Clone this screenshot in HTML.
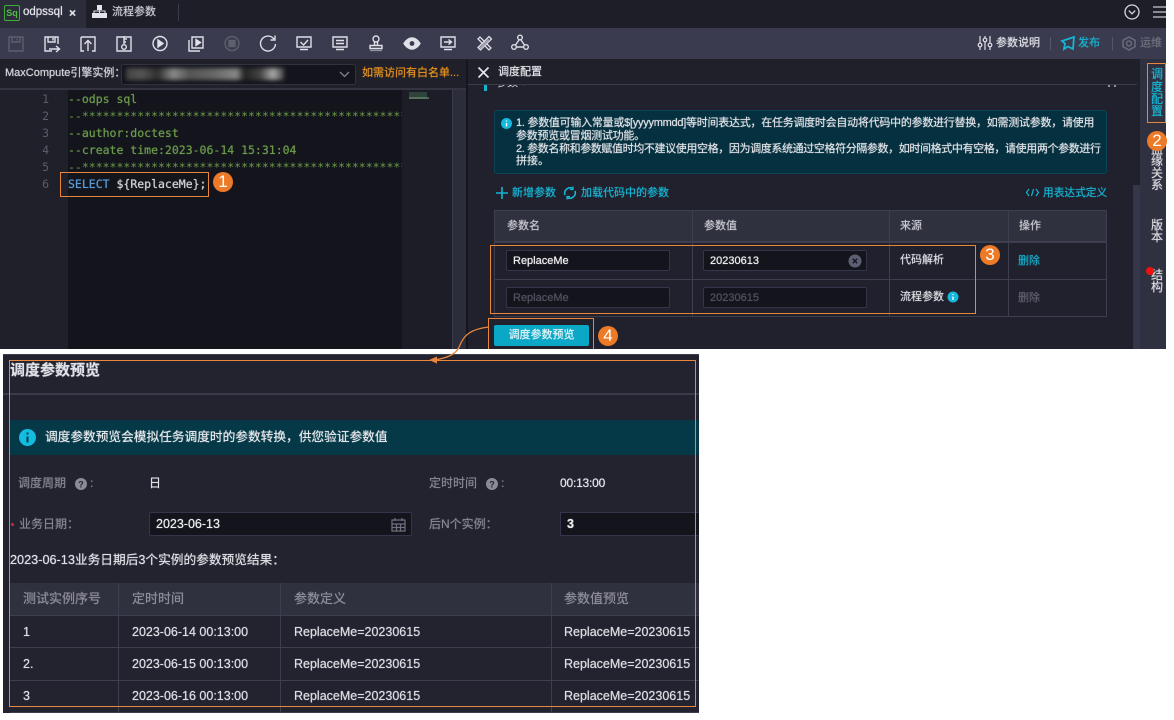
<!DOCTYPE html>
<html><head><meta charset="utf-8">
<style>
html,body{margin:0;padding:0;background:#fff}
#p{position:relative;width:1174px;height:720px;overflow:hidden;background:#fff;font-family:"Liberation Sans","Noto Sans CJK SC",sans-serif;font-size:11px;color:#d8d9de}
.a{position:absolute}
.t{position:absolute;white-space:nowrap;line-height:16px;transform:translateY(-8px);text-shadow:0 0 .7px currentColor}
.num{position:absolute;border-radius:50%;background:#ec7a26;color:#fff;width:20px;height:20px;line-height:20px;text-align:center;font-size:17px}
.ob{position:absolute;border:1px solid #e9863c;box-sizing:border-box}
.c{font-family:"DejaVu Sans Mono","Liberation Mono",monospace;font-size:11.5px;color:#6a9a4a}
.ln{position:absolute;left:30px;width:19px;text-align:right;font-family:"DejaVu Sans Mono",monospace;font-size:11.5px;color:#5a5c68;line-height:16px;transform:translateY(-8px)}
.inp{position:absolute;background:#14151c;border:1px solid #33354a;box-sizing:border-box;border-radius:2px}
.vt{position:absolute;left:1150px;font-size:12px;width:14px;text-align:center;line-height:14px;transform:translateY(-7px);text-shadow:0 0 .7px currentColor}
svg{position:absolute;overflow:visible}
</style></head><body><div id="p">

<!-- upper app -->
<div class="a" style="left:0;top:0;width:1166px;height:349px;background:#1f2029"></div>
<!-- tab bar -->
<div class="a" style="left:0;top:0;width:1166px;height:28px;background:#1d1e28"></div>
<div class="a" style="left:0;top:0;width:86px;height:28px;background:#2c2d3b"></div>
<div class="a" style="left:4px;top:5px;width:14px;height:14px;border:1px solid #3fae3a;border-radius:2px;color:#4fbe45;font-size:9px;line-height:14px;text-align:center;font-weight:bold">Sq</div>
<div class="t" style="left:23px;top:12px;font-size:11.5px;color:#e4e5ea">odpssql</div>
<div class="t" style="left:69px;top:13px;font-size:12px;color:#e4e5ea;font-weight:bold">×</div>
<svg style="left:92px;top:5px" width="15" height="14" fill="#e4e5ea"><rect x="5" y="0" width="5" height="5"/><rect x="0" y="8" width="5" height="5"/><rect x="10" y="8" width="5" height="5"/><path d="M2 8V6h11v2M7.5 5v3" stroke="#e4e5ea" fill="none"/><rect x="5" y="8" width="5" height="5"/></svg>
<div class="t" style="left:112px;top:12px;font-size:11px;color:#c9cad1">流程参数</div>
<div class="a" style="left:178px;top:4px;width:1px;height:17px;background:#3a3b4a"></div>
<svg style="left:1124px;top:4px" width="16" height="16" fill="none" stroke="#d5d6dc" stroke-width="1.3"><circle cx="8" cy="8" r="7"/><path d="M4.800 6.600 8 9.800l3.200-3.200"/></svg>
<svg style="left:1153px;top:6px" width="13" height="13" stroke="#c8c9d0" stroke-width="1.2"><path d="M0 1h13M0 6h13M0 11h13"/></svg>

<!-- toolbar -->
<div class="a" style="left:0;top:28px;width:1166px;height:31px;background:#3a3b4e"></div>
<svg style="left:0;top:28px" width="540" height="31" fill="none" stroke="#dfe0e8" stroke-width="1.4">
 <g stroke="#5d5f6d"><path d="M9 9h14v14H9zM12 9v5h8V9M17 10.500v2"/></g>
 <path d="M52 23h-7V9h13v7M48 9v5h7V9M53 10v2.500M49 21h10M56 18l3.500 3-3.500 3"/>
 <path d="M81 9h14v14h-3M84 23h-3V9M88 23v-10M84.500 16 88 12.500l3.500 3.500"/>
 <path d="M117 9h14v14h-14zM124 8v8M124 11h3M124 14h2"/><circle cx="124" cy="19" r="2.300"/>
 <circle cx="160" cy="15.500" r="7"/><path d="M158 12v7l5-3.500z" fill="#dfe0e8"/>
 <path d="M189 12v11h11M192 9h11v11h-11z"/><path d="M196 11.500v6l4.500-3z" fill="#dfe0e8"/>
 <g stroke="#5d5f6d"><circle cx="232" cy="15.500" r="7"/><rect x="229" y="12.500" width="6" height="6" fill="#5d5f6d"/></g>
 <path d="M274 11a7.500 7.500 0 1 0 1.500 5M275 7.500V12h-4.500"/>
 <path d="M297 9h14v10h-14zM300 21.500h8M300.500 14l3 3 4.500-5"/>
 <path d="M333 9h14v10h-14zM336 12.500h8M336 15.500h8M336 21.500h8" />
 <circle cx="376" cy="11" r="3"/><path d="M374.500 14v3M377.500 14v3M370 17.500h12v3h-12z"/><path d="M370 22.500h12" stroke="#8e8f9a"/>
 <path d="M404 15.500c2.500-4 5-5.500 8-5.500s5.500 1.500 8 5.500c-2.500 4-5 5.500-8 5.500s-5.500-1.500-8-5.500z" fill="#dfe0e8"/><circle cx="412" cy="15.500" r="2.400" fill="#3a3b4e" stroke="none"/>
 <path d="M441 9h14v10h-14zM444 21.500h8M444 14h7M448.500 11.500l3 2.500-3 2.500"/>
 <path d="M478 11l2-2 11 11-2 2zM489 8.500l2.500 2.500-11 11-2.500-2.500z" stroke-width="1.300"/><path d="M480 20.500l9-9" stroke="#a0a1ac" stroke-width="2.400"/>
 <circle cx="520" cy="9.500" r="2.300"/><circle cx="514" cy="19" r="2.300"/><circle cx="526" cy="19" r="2.300"/><path d="M519 12l-3.500 5M521 12l3.500 5M516.500 19h7"/>
</svg>
<svg style="left:978px;top:36px" width="14" height="14" fill="none" stroke="#dfe0e8" stroke-width="1.200"><path d="M2 0v14M7 0v14M12 0v14"/><circle cx="2" cy="9" r="1.800" fill="#3a3b4e"/><circle cx="7" cy="4" r="1.800" fill="#3a3b4e"/><circle cx="12" cy="9" r="1.800" fill="#3a3b4e"/></svg>
<div class="t" style="left:996px;top:43px;color:#dfe0e8;font-size:11px">参数说明</div>
<div class="a" style="left:1050px;top:37px;width:1px;height:13px;background:#565868"></div>
<svg style="left:1061px;top:36px" width="14" height="15" fill="none" stroke="#16b4d2" stroke-width="1.800"><path d="M1 5 13 1l-1 12-5-2.500L3 13l1-5.500z"/></svg>
<div class="t" style="left:1078px;top:43px;color:#16b4d2;font-size:11px">发布</div>
<div class="a" style="left:1112px;top:37px;width:1px;height:13px;background:#565868"></div>
<svg style="left:1122px;top:36px" width="14" height="15" fill="none" stroke="#6a6c7a" stroke-width="1.500"><path d="M7 1l6 3.300v6.400L7 14l-6-3.300V4.300z"/><circle cx="7" cy="7.500" r="2.500"/></svg>
<div class="t" style="left:1140px;top:43px;color:#6f717e;font-size:11px">运维</div>

<!-- row under toolbar -->
<div class="a" style="left:0;top:59px;width:1166px;height:30px;background:#1f2029"></div>
<div class="a" style="left:0;top:88px;width:466px;height:2px;background:#33343f"></div>
<div class="t" style="left:5px;top:73px;font-size:11px;color:#d4d5da">MaxCompute引擎实例：</div>
<div class="a" style="left:121px;top:64px;width:235px;height:21px;background:#14151c;border:1px solid #30323f;box-sizing:border-box;border-radius:3px"></div>
<div class="a" style="left:126px;top:68px;width:158px;height:12px;filter:blur(2px);background:linear-gradient(90deg,#444 0,#555 10%,#2e2e2e 20%,#8a8a8a 30%,#555 40%,#666 55%,#888 70%,#222 75%,#444 85%,#aaa 93%,#444 100%)"></div>
<svg style="left:339px;top:71px" width="11" height="7" fill="none" stroke="#7f818c" stroke-width="1.300"><path d="M1 1l4.500 4.500L10 1"/></svg>
<div class="t" style="left:362px;top:73px;color:#e6901f;font-size:11px">如需访问有白名单...</div>

<!-- editor -->
<div class="a" style="left:0;top:90px;width:68px;height:259px;background:#1f2029"></div>
<div class="a" style="left:68px;top:90px;width:334px;height:259px;background:#14151c"></div>
<div class="a" style="left:402px;top:90px;width:50px;height:259px;background:#1c1d27"></div>
<div class="a" style="left:452px;top:90px;width:14px;height:259px;background:#2c2d3a"></div>
<div class="a" style="left:409px;top:92px;width:18px;height:7px;background:#3b5f4a;opacity:.6"></div>
<div class="a" style="left:409px;top:97px;width:20px;height:2px;background:#7da07d;opacity:.5"></div>
<div class="a" style="left:452px;top:90px;width:0;height:259px;border-left:1px solid #3a3b4a"></div>
<div class="ln" style="top:99px">1</div><div class="ln" style="top:116px">2</div><div class="ln" style="top:133px">3</div><div class="ln" style="top:150px">4</div><div class="ln" style="top:167px">5</div><div class="ln" style="top:184px">6</div>
<div class="t c" style="left:68px;top:99px">--odps sql</div>
<div class="a" style="left:68px;top:108px;width:334px;height:16px;overflow:hidden;white-space:nowrap;line-height:16px"><span class="c">--*********************************************************</span></div>
<div class="t c" style="left:68px;top:133px">--author:doctest</div>
<div class="t c" style="left:68px;top:150px">--create time:2023-06-14 15:31:04</div>
<div class="a" style="left:68px;top:159px;width:334px;height:14px;overflow:hidden;white-space:nowrap;line-height:16px"><span class="c">--*********************************************************</span></div>
<div class="t c" style="left:68px;top:184px;color:#d0d2d8"><span style="color:#5a9bd5">SELECT</span> ${ReplaceMe};</div>
<div class="ob" style="left:60px;top:172px;width:149px;height:25px"></div>
<div class="num" style="left:213px;top:172px">1</div>

<!-- right panel -->
<div class="a" style="left:466px;top:60px;width:2px;height:289px;background:#14151c"></div>
<svg style="left:478px;top:67px" width="11" height="11" stroke="#e4e5ea" stroke-width="1.700"><path d="M0.500 0.500l10 10M10.500 0.500l-10 10"/></svg>
<div class="t" style="left:498px;top:72px;font-size:11px;color:#e4e5ea">调度配置</div>
<div class="a" style="left:468px;top:84px;width:669px;height:1px;background:#3b3c49"></div>
<div class="a" style="left:468px;top:85px;width:669px;height:264px;background:#20212d"></div>
<div class="a" style="left:484px;top:85px;width:3px;height:6px;background:#16b4d2"></div>
<div class="a" style="left:496px;top:85px;width:34px;height:5px;overflow:hidden"><div style="position:absolute;top:-9px;line-height:14px;white-space:nowrap;color:#d5d6dc;font-size:11px">参数 <span style="color:#16b4d2">●</span></div></div>
<div class="a" style="left:1108px;top:85px;width:8px;height:2px;border-left:2px solid #8e8f9a;border-right:2px solid #8e8f9a;box-sizing:border-box"></div>
<div class="a" style="left:494px;top:110px;width:613px;height:64px;background:#05303f;border:1px solid #0b4553;box-sizing:border-box;border-radius:3px"></div>
<svg style="left:501px;top:118px" width="11" height="11"><circle cx="5.500" cy="5.500" r="5.500" fill="#16b8dc"/><path d="M5.500 5v3.500M5.500 2.500v1" stroke="#fff" stroke-width="1.400"/></svg>
<div class="t" style="left:516px;top:123px;font-size:11px;color:#dfe1e6;letter-spacing:-.26px">1. 参数值可输入常量或$[yyyymmdd]等时间表达式，在任务调度时会自动将代码中的参数进行替换，如需测试参数，请使用</div>
<div class="t" style="left:516px;top:136px;font-size:11px;color:#dfe1e6;letter-spacing:-.26px">参数预览或冒烟测试功能。</div>
<div class="t" style="left:516px;top:149px;font-size:11px;color:#dfe1e6;letter-spacing:-.38px">2. 参数名称和参数赋值时均不建议使用空格，因为调度系统通过空格符分隔参数，如时间格式中有空格，请使用两个参数进行</div>
<div class="t" style="left:516px;top:161px;font-size:11px;color:#dfe1e6">拼接。</div>

<svg style="left:496px;top:187px" width="12" height="12" stroke="#16b4d2" stroke-width="1.600"><path d="M6 0v12M0 6h12"/></svg>
<div class="t" style="left:512px;top:192.500px;color:#16b4d2;font-size:11px">新增参数</div>
<svg style="left:563px;top:186px" width="14" height="14" fill="none" stroke="#16b4d2" stroke-width="1.600"><path d="M2 9a5.500 5.500 0 0 1 8-6.500M12 5a5.500 5.500 0 0 1-8 6.500"/><path d="M10 0.500v3H7M4 13.500v-3h3" stroke-width="1.200"/></svg>
<div class="t" style="left:581px;top:192.500px;color:#16b4d2;font-size:11px">加载代码中的参数</div>
<svg style="left:1026px;top:188px" width="13" height="9" fill="none" stroke="#16b4d2" stroke-width="1.200"><path d="M3 1 .5 4.500 3 8M10 1l2.500 3.500L10 8M7.500 1 5.500 8"/></svg>
<div class="t" style="left:1043px;top:192.500px;color:#16b4d2;font-size:10.700px">用表达式定义</div>

<!-- params table -->
<div class="a" style="left:494px;top:210px;width:613px;height:107px;border:1px solid #3d3f50;box-sizing:border-box"></div>
<div class="a" style="left:495px;top:211px;width:611px;height:31px;background:#30313f"></div>
<div class="a" style="left:495px;top:241px;width:611px;height:2px;background:#3d3f50"></div>
<div class="a" style="left:495px;top:279px;width:611px;height:1px;background:#3d3f50"></div>
<div class="a" style="left:692px;top:211px;width:1px;height:105px;background:#3d3f50"></div>
<div class="a" style="left:889px;top:211px;width:1px;height:105px;background:#3d3f50"></div>
<div class="a" style="left:1008px;top:211px;width:1px;height:105px;background:#3d3f50"></div>
<div class="t" style="left:507px;top:226px;color:#c8c9d1;font-size:11px">参数名</div>
<div class="t" style="left:704px;top:226px;color:#c8c9d1;font-size:11px">参数值</div>
<div class="t" style="left:900px;top:226px;color:#c8c9d1;font-size:11px">来源</div>
<div class="t" style="left:1019px;top:226px;color:#c8c9d1;font-size:11px">操作</div>
<div class="inp" style="left:506px;top:250px;width:164px;height:21px"></div>
<div class="inp" style="left:703px;top:250px;width:164px;height:21px"></div>
<div class="inp" style="left:506px;top:287px;width:164px;height:21px"></div>
<div class="inp" style="left:703px;top:287px;width:164px;height:21px"></div>
<div class="t" style="left:513px;top:261px;color:#f0f0f3;font-size:11px">ReplaceMe</div>
<div class="t" style="left:710px;top:261px;color:#f0f0f3;font-size:11px">20230613</div>
<svg style="left:848px;top:254px" width="14" height="14"><circle cx="7" cy="7" r="6.500" fill="#5d5f72"/><path d="M4.800 4.800l4.400 4.400M9.200 4.800l-4.400 4.400" stroke="#14151c" stroke-width="1.400"/></svg>
<div class="t" style="left:513px;top:298px;color:#4f515f;font-size:11px">ReplaceMe</div>
<div class="t" style="left:710px;top:298px;color:#4f515f;font-size:11px">20230615</div>
<div class="t" style="left:900px;top:260px;color:#dcdde2;font-size:11px">代码解析</div>
<div class="t" style="left:900px;top:297px;color:#dcdde2;font-size:11px">流程参数</div>
<svg style="left:947px;top:291px" width="12" height="12"><circle cx="6" cy="6" r="5.500" fill="#16b8dc"/><path d="M6 5.500v3.500M6 3v1" stroke="#fff" stroke-width="1.300"/></svg>
<div class="t" style="left:1018px;top:261px;color:#16a9c6;font-size:11px">删除</div>
<div class="t" style="left:1018px;top:298px;color:#5c5e6b;font-size:11px">删除</div>
<div class="ob" style="left:490px;top:245px;width:486px;height:69px"></div>
<div class="num" style="left:980px;top:245px">3</div>
<div class="a" style="left:494px;top:325px;width:95px;height:21px;background:#0aa7c6;border-radius:2px;color:#e8f6fa;text-align:center;line-height:21px;font-size:11px;text-shadow:0 0 .7px #e8f6fa">调度参数预览</div>
<div class="ob" style="left:488px;top:318px;width:106px;height:32px"></div>
<div class="num" style="left:598px;top:326px">4</div>

<!-- scrollbar + side tabs -->
<div class="a" style="left:1133px;top:185px;width:7px;height:164px;background:#34364a"></div>
<div class="a" style="left:1140px;top:59px;width:26px;height:290px;background:#2f3040"></div>
<div class="vt" style="top:74px;color:#16b4d2">调</div><div class="vt" style="top:87px;color:#16b4d2">度</div><div class="vt" style="top:99px;color:#16b4d2">配</div><div class="vt" style="top:111px;color:#16b4d2">置</div>
<div class="ob" style="left:1147px;top:63px;width:19px;height:60px"></div>
<div class="vt" style="top:150px">血</div><div class="vt" style="top:161px">缘</div><div class="vt" style="top:173px">关</div><div class="vt" style="top:185px">系</div>
<div class="num" style="left:1147px;top:131px">2</div>
<div class="vt" style="top:225px">版</div><div class="vt" style="top:237px">本</div>
<div class="vt" style="top:275px">结</div><div class="vt" style="top:287px">构</div>
<div class="a" style="left:1146px;top:267px;width:8px;height:8px;border-radius:50%;background:#f01010"></div>

<!-- white below -->
<div class="a" style="left:0;top:349px;width:1174px;height:371px;background:#fff"></div>

<!-- preview -->
<div class="a" style="left:3px;top:354px;width:696px;height:359px;background:#22232f"></div>
<div class="a" style="left:3px;top:354px;width:696px;height:1px;background:#3d3f4c"></div>
<div class="t" style="left:10px;top:371px;font-size:15px;font-weight:bold;color:#e0e1e6">调度参数预览</div>
<div class="a" style="left:3px;top:393px;width:696px;height:2px;background:#3a3b4a"></div>
<div class="a" style="left:10px;top:420px;width:689px;height:35px;background:#053947"></div>
<svg style="left:19px;top:429px" width="17" height="17"><circle cx="8.500" cy="8.500" r="8.500" fill="#12bde0"/><path d="M8.500 7.500v6M8.500 3.500v2" stroke="#0c3a4a" stroke-width="2"/></svg>
<div class="t" style="left:45px;top:437px;font-size:12.700px;color:#e8e9ed">调度参数预览会模拟任务调度时的参数转换，供您验证参数值</div>
<div class="t" style="left:18px;top:483px;font-size:12px;color:#858692">调度周期</div>
<svg style="left:75px;top:478px" width="12" height="12"><circle cx="6" cy="6" r="6" fill="#8a8b96"/><text x="6" y="9.500" font-size="9" text-anchor="middle" fill="#22232f" font-weight="bold" font-family="Liberation Sans">?</text></svg>
<div class="t" style="left:90px;top:483px;font-size:12px;color:#858692">:</div>
<div class="t" style="left:149px;top:483px;font-size:12px;color:#e4e5ea">日</div>
<div class="t" style="left:429px;top:483px;font-size:12px;color:#858692">定时时间</div>
<svg style="left:486px;top:478px" width="12" height="12"><circle cx="6" cy="6" r="6" fill="#8a8b96"/><text x="6" y="9.500" font-size="9" text-anchor="middle" fill="#22232f" font-weight="bold" font-family="Liberation Sans">?</text></svg>
<div class="t" style="left:501px;top:483px;font-size:12px;color:#858692">:</div>
<div class="t" style="left:560px;top:483px;font-size:12px;color:#e4e5ea;letter-spacing:-.2px">00:13:00</div>
<div class="a" style="left:11px;top:523px;width:3px;height:3px;border-radius:50%;background:#c0303a"></div>
<div class="t" style="left:19px;top:524px;font-size:12px;color:#858692">业务日期：</div>
<div class="inp" style="left:149px;top:512px;width:263px;height:24px"></div>
<div class="t" style="left:156px;top:524px;font-size:12.500px;color:#ecedf0">2023-06-13</div>
<svg style="left:391px;top:517px" width="15" height="15" fill="none" stroke="#6f7080" stroke-width="1.200"><path d="M1 3h13v11H1zM1 7h13M4 1v3M11 1v3M5.500 7v7M9.500 7v7M1 10.500h13"/></svg>
<div class="t" style="left:429px;top:524px;font-size:12px;color:#858692">后N个实例：</div>
<div class="a" style="left:560px;top:512px;width:139px;height:24px;background:#14151c;border:1px solid #33354a;border-right:none;box-sizing:border-box"></div>
<div class="t" style="left:567px;top:524px;font-size:12.500px;font-weight:bold;color:#ecedf0">3</div>
<div class="t" style="left:10px;top:560px;font-size:12.700px;color:#dfe0e5">2023-06-13业务日期后3个实例的参数预览结果：</div>

<div class="a" style="left:10px;top:583px;width:689px;height:33px;background:#30313f"></div>
<div class="a" style="left:10px;top:615px;width:689px;height:1px;background:#3d3f50"></div>
<div class="a" style="left:10px;top:647px;width:689px;height:1px;background:#3d3f50"></div>
<div class="a" style="left:10px;top:680px;width:689px;height:1px;background:#3d3f50"></div>
<div class="a" style="left:10px;top:712px;width:689px;height:1px;background:#3d3f50"></div>
<div class="a" style="left:118px;top:583px;width:1px;height:129px;background:#3d3f50"></div>
<div class="a" style="left:280px;top:583px;width:1px;height:129px;background:#3d3f50"></div>
<div class="a" style="left:551px;top:583px;width:1px;height:129px;background:#3d3f50"></div>
<div class="t" style="left:23px;top:599px;font-size:13px;color:#8d8e9a">测试实例序号</div>
<div class="t" style="left:132px;top:599px;font-size:13px;color:#8d8e9a">定时时间</div>
<div class="t" style="left:294px;top:599px;font-size:13px;color:#8d8e9a">参数定义</div>
<div class="t" style="left:564px;top:599px;font-size:13px;color:#8d8e9a">参数值预览</div>
<div class="t" style="left:23px;top:632px;font-size:12.500px;color:#dcdde2">1</div>
<div class="t" style="left:132px;top:632px;font-size:12.500px;color:#dcdde2">2023-06-14 00:13:00</div>
<div class="t" style="left:294px;top:632px;font-size:12.500px;color:#dcdde2">ReplaceMe=20230615</div>
<div class="t" style="left:564px;top:632px;font-size:12.500px;color:#dcdde2">ReplaceMe=20230615</div>
<div class="t" style="left:23px;top:664px;font-size:12.500px;color:#dcdde2">2.</div>
<div class="t" style="left:132px;top:664px;font-size:12.500px;color:#dcdde2">2023-06-15 00:13:00</div>
<div class="t" style="left:294px;top:664px;font-size:12.500px;color:#dcdde2">ReplaceMe=20230615</div>
<div class="t" style="left:564px;top:664px;font-size:12.500px;color:#dcdde2">ReplaceMe=20230615</div>
<div class="t" style="left:23px;top:696px;font-size:12.500px;color:#dcdde2">3</div>
<div class="t" style="left:132px;top:696px;font-size:12.500px;color:#dcdde2">2023-06-16 00:13:00</div>
<div class="t" style="left:294px;top:696px;font-size:12.500px;color:#dcdde2">ReplaceMe=20230615</div>
<div class="t" style="left:564px;top:696px;font-size:12.500px;color:#dcdde2">ReplaceMe=20230615</div>
<div class="ob" style="left:9px;top:360px;width:687px;height:347px"></div>

<!-- arrow -->
<svg style="left:0;top:0" width="1174" height="720" fill="none"><path d="M489 327c-18 2-25 8-29 18-3 9-12 13-26 15" stroke="#e9863c" stroke-width="1.300"/><path d="M429 360l8-3.500v7z" fill="#e9863c"/></svg>
</div></body></html>
